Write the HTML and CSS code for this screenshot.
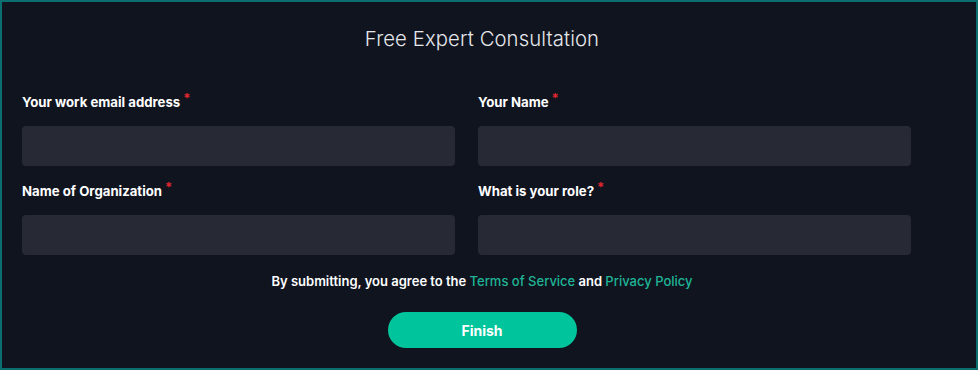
FILE: index.html
```html
<!DOCTYPE html>
<html lang="en">
<head>
<meta charset="utf-8">
<title>Free Expert Consultation</title>
<link rel="stylesheet" href="styles.css">
</head>
<body>
<div class="frame">
  <h1 class="title">Free Expert Consultation</h1>
  <form class="form">
    <div class="grid">
      <label class="field">
        <span class="label">Your work email address<sup class="req">*</sup></span>
        <input class="input" type="email">
      </label>
      <label class="field">
        <span class="label">Your Name<sup class="req">*</sup></span>
        <input class="input" type="text">
      </label>
      <label class="field">
        <span class="label">Name of Organization<sup class="req">*</sup></span>
        <input class="input" type="text">
      </label>
      <label class="field">
        <span class="label">What is your role?<sup class="req">*</sup></span>
        <input class="input" type="text">
      </label>
    </div>
    <p class="agree">By submitting, you agree to the <a class="link" href="#">Terms of Service</a> and <a class="link" href="#">Privacy Policy</a></p>
    <div class="actions">
      <button class="btn" type="button">Finish</button>
    </div>
  </form>
</div>
</body>
</html>
```

FILE: styles.css
```css
* { box-sizing: border-box; }
html, body { margin: 0; padding: 0; }
body {
  width: 978px;
  height: 370px;
  background: #10141f;
  font-family: Inter, "Noto Sans", sans-serif;
}
.frame {
  width: 978px;
  height: 370px;
  border: 2px solid #0b6f6f;
  background: #10141f;
  padding: 22px 34px 0 20px;
}
.title {
  margin: 0;
  text-align: center;
  font-family: Inter, sans-serif;
  font-weight: 300;
  font-size: 20.3px;
  line-height: 30px;
  color: #e6e8ec;
  letter-spacing: 0.1px;
}
.form { margin: 0; }
.grid {
  display: grid;
  grid-template-columns: 433px 433px;
  column-gap: 23px;
  row-gap: 15px;
  margin-top: 38px;
}
.field { display: flex; flex-direction: column; }
.label {
  font-weight: 700;
  font-size: 13.2px;
  line-height: 20px;
  color: #ffffff;
  margin-bottom: 14px;
}
.req {
  color: #e0262e;
  font-size: 13px;
  line-height: 0;
  margin-left: 3px;
  vertical-align: 4px;
}
.input {
  width: 100%;
  height: 40px;
  border: none;
  border-radius: 4px;
  background: #272a35;
  outline: none;
  margin: 0;
}
.agree {
  margin: 16px 0 0;
  text-align: center;
  font-weight: 600;
  font-size: 13px;
  line-height: 20px;
  color: #ffffff;
}
.link {
  color: #1fb596;
  font-weight: 500;
  text-decoration: none;
}
.actions {
  display: flex;
  justify-content: center;
  margin-top: 21px;
}
.btn {
  width: 189px;
  height: 36px;
  border: none;
  border-radius: 18px;
  background: #00c49b;
  color: #ffffff;
  font-family: Inter, sans-serif;
  font-weight: 700;
  font-size: 14px;
  cursor: pointer;
}
```
